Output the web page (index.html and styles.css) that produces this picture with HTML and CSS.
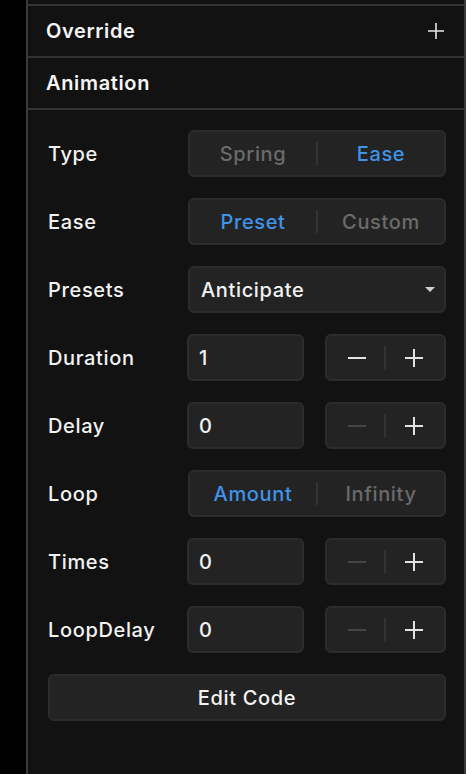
FILE: index.html
```html
<!DOCTYPE html>
<html>
<head>
<meta charset="utf-8">
<link rel="stylesheet" href="styles.css">
</head>
<body>
<div class="panel">
  <div class="top-strip"></div>
  <div class="header">
    <span class="title">Override</span>
    <svg class="hplus" width="18" height="18" viewBox="0 0 18 18"><path d="M9 1v16M1 9h16" stroke="#e6e6e6" stroke-width="1.6"/></svg>
  </div>
  <div class="header">
    <span class="title">Animation</span>
  </div>
  <div class="content">
    <div class="row">
      <span class="label">Type</span>
      <div class="seg">
        <span class="seg-item off">Spring</span>
        <span class="seg-div"></span>
        <span class="seg-item on">Ease</span>
      </div>
    </div>
    <div class="row">
      <span class="label">Ease</span>
      <div class="seg">
        <span class="seg-item on">Preset</span>
        <span class="seg-div"></span>
        <span class="seg-item off">Custom</span>
      </div>
    </div>
    <div class="row">
      <span class="label">Presets</span>
      <div class="select">
        <span>Anticipate</span>
        <svg width="10" height="5" viewBox="0 0 10 5"><path d="M0 0h10L5 5z" fill="#d0d0d0"/></svg>
      </div>
    </div>
    <div class="row">
      <span class="label">Duration</span>
      <div class="pair">
        <div class="input">1</div>
        <div class="stepper">
          <svg class="step active" width="18" height="18" viewBox="0 0 18 18"><path d="M0 9h18" stroke="currentColor" stroke-width="2"/></svg>
          <span class="seg-div"></span>
          <svg class="step active" width="18" height="18" viewBox="0 0 18 18"><path d="M9 0v18M0 9h18" stroke="currentColor" stroke-width="2"/></svg>
        </div>
      </div>
    </div>
    <div class="row">
      <span class="label">Delay</span>
      <div class="pair">
        <div class="input">0</div>
        <div class="stepper">
          <svg class="step disabled" width="18" height="18" viewBox="0 0 18 18"><path d="M0 9h18" stroke="currentColor" stroke-width="2"/></svg>
          <span class="seg-div"></span>
          <svg class="step active" width="18" height="18" viewBox="0 0 18 18"><path d="M9 0v18M0 9h18" stroke="currentColor" stroke-width="2"/></svg>
        </div>
      </div>
    </div>
    <div class="row">
      <span class="label">Loop</span>
      <div class="seg">
        <span class="seg-item on">Amount</span>
        <span class="seg-div"></span>
        <span class="seg-item off">Infinity</span>
      </div>
    </div>
    <div class="row">
      <span class="label">Times</span>
      <div class="pair">
        <div class="input">0</div>
        <div class="stepper">
          <svg class="step disabled" width="18" height="18" viewBox="0 0 18 18"><path d="M0 9h18" stroke="currentColor" stroke-width="2"/></svg>
          <span class="seg-div"></span>
          <svg class="step active" width="18" height="18" viewBox="0 0 18 18"><path d="M9 0v18M0 9h18" stroke="currentColor" stroke-width="2"/></svg>
        </div>
      </div>
    </div>
    <div class="row">
      <span class="label">LoopDelay</span>
      <div class="pair">
        <div class="input">0</div>
        <div class="stepper">
          <svg class="step disabled" width="18" height="18" viewBox="0 0 18 18"><path d="M0 9h18" stroke="currentColor" stroke-width="2"/></svg>
          <span class="seg-div"></span>
          <svg class="step active" width="18" height="18" viewBox="0 0 18 18"><path d="M9 0v18M0 9h18" stroke="currentColor" stroke-width="2"/></svg>
        </div>
      </div>
    </div>
    <div class="button">Edit Code</div>
  </div>
</div>
</body>
</html>
```
FILE: styles.css
```css
html, body {
  margin: 0;
  padding: 0;
  background: #000;
  height: 100%;
}
body {
  font-family: Inter, "Liberation Sans", sans-serif;
  color: #f2f2f2;
  overflow: hidden;
  letter-spacing: 0.65px;
}
.panel {
  margin-left: 26px;
  height: 774px;
  background: #121212;
  border-left: 2px solid #3a3a3a;
  border-right: 2px solid #3a3a3a;
  box-sizing: border-box;
}
.top-strip {
  height: 4px;
  border-bottom: 2px solid #333;
}
.header {
  height: 50px;
  border-bottom: 2px solid #333;
  display: flex;
  align-items: center;
  justify-content: space-between;
  padding: 0 19px 0 18px;
}
.title {
  font-size: 20px;
  font-weight: 600;
  color: #f5f5f5;
}
.hplus {
  display: block;
}
.content {
  padding: 20px 18px 0 20px;
  display: flex;
  flex-direction: column;
  gap: 21px;
}
.row {
  display: grid;
  grid-template-columns: 140px 1fr;
  align-items: center;
  height: 47px;
}
.label {
  font-size: 20px;
  font-weight: 500;
  color: #f2f2f2;
}
.seg, .select, .input, .stepper, .button {
  background: #232323;
  border: 2px solid #2c2c2c;
  border-radius: 6px;
  box-sizing: border-box;
  height: 47px;
}
.seg {
  display: flex;
  align-items: center;
}
.seg-item {
  flex: 1;
  text-align: center;
  font-size: 20px;
  font-weight: 500;
}
.seg-item.on { color: #3f93e8; }
.seg-item.off { color: #6b6b6b; }
.seg-div {
  width: 2px;
  height: 23px;
  background: #333;
  flex: none;
}
.select {
  display: flex;
  align-items: center;
  justify-content: space-between;
  padding: 0 9px 0 11px;
  font-size: 20px;
  font-weight: 500;
  color: #f2f2f2;
}
.pair {
  display: grid;
  grid-template-columns: 117px 121px;
  justify-content: space-between;
  margin-left: -1px;
}
.input {
  display: flex;
  align-items: center;
  padding-left: 10px;
  font-size: 20px;
  font-weight: 500;
  color: #f2f2f2;
}
.stepper {
  display: flex;
  align-items: center;
  justify-content: space-around;
  padding: 0 12px;
}
.step { display: block; }
.step.active { color: #e2e2e2; }
.step.disabled { color: #454545; }
.button {
  display: flex;
  align-items: center;
  justify-content: center;
  font-size: 20px;
  font-weight: 500;
  color: #f2f2f2;
}
```
